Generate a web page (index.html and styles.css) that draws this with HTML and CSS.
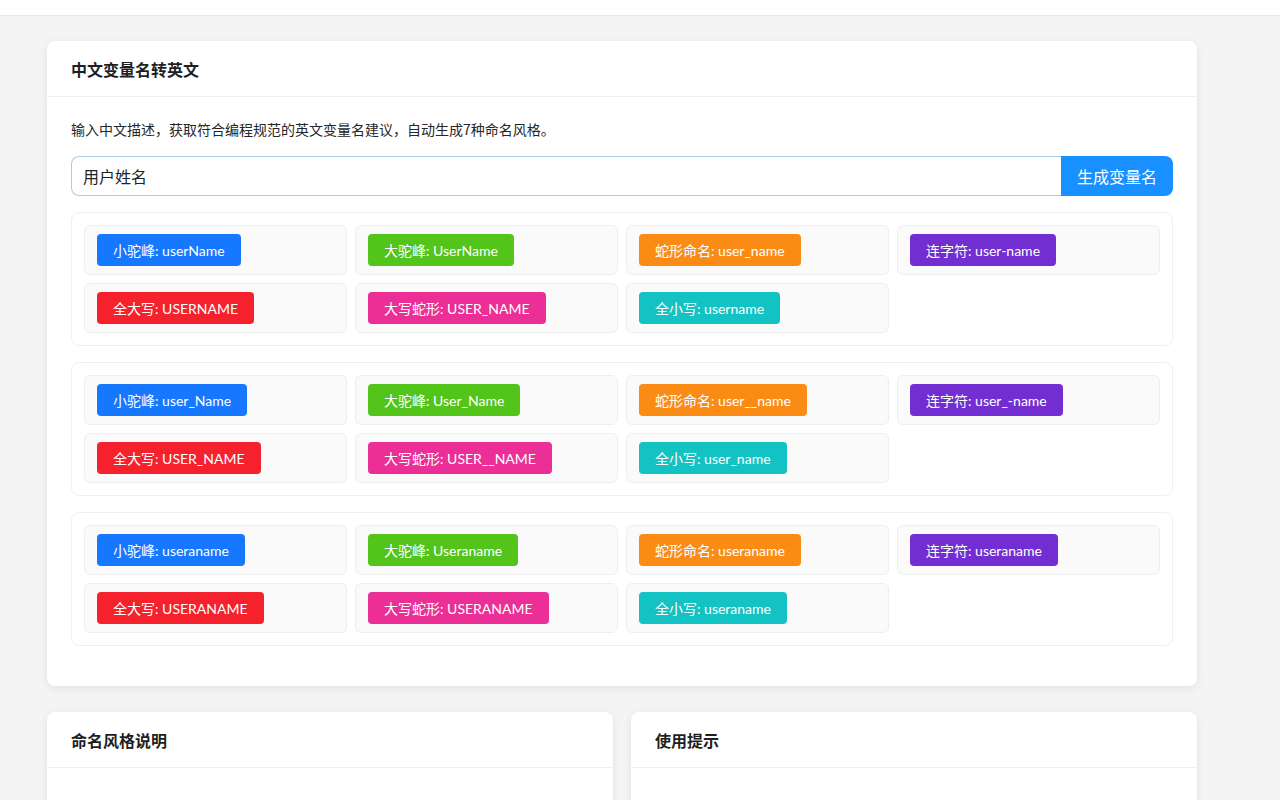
FILE: index.html
```html
<!DOCTYPE html>
<html lang="zh-CN">
<head>
<meta charset="utf-8">
<title>中文变量名转英文</title>
<link rel="stylesheet" href="styles.css">
</head>
<body>
<div class="topbar"></div>
<main class="page">
  <section class="card">
    <div class="card-head">中文变量名转英文</div>
    <div class="card-body">
      <p class="desc">输入中文描述，获取符合编程规范的英文变量名建议，自动生成7种命名风格。</p>
      <div class="search">
        <input class="search-input" type="text" value="用户姓名">
        <button class="search-btn">生成变量名</button>
      </div>

      <div class="group">
        <div class="item"><span class="tag t-blue">小驼峰: userName</span></div>
        <div class="item"><span class="tag t-green">大驼峰: UserName</span></div>
        <div class="item"><span class="tag t-orange">蛇形命名: user_name</span></div>
        <div class="item"><span class="tag t-purple">连字符: user-name</span></div>
        <div class="item"><span class="tag t-red">全大写: USERNAME</span></div>
        <div class="item"><span class="tag t-magenta">大写蛇形: USER_NAME</span></div>
        <div class="item"><span class="tag t-cyan">全小写: username</span></div>
      </div>

      <div class="group">
        <div class="item"><span class="tag t-blue">小驼峰: user_Name</span></div>
        <div class="item"><span class="tag t-green">大驼峰: User_Name</span></div>
        <div class="item"><span class="tag t-orange">蛇形命名: user__name</span></div>
        <div class="item"><span class="tag t-purple">连字符: user_-name</span></div>
        <div class="item"><span class="tag t-red">全大写: USER_NAME</span></div>
        <div class="item"><span class="tag t-magenta">大写蛇形: USER__NAME</span></div>
        <div class="item"><span class="tag t-cyan">全小写: user_name</span></div>
      </div>

      <div class="group">
        <div class="item"><span class="tag t-blue">小驼峰: useraname</span></div>
        <div class="item"><span class="tag t-green">大驼峰: Useraname</span></div>
        <div class="item"><span class="tag t-orange">蛇形命名: useraname</span></div>
        <div class="item"><span class="tag t-purple">连字符: useraname</span></div>
        <div class="item"><span class="tag t-red">全大写: USERANAME</span></div>
        <div class="item"><span class="tag t-magenta">大写蛇形: USERANAME</span></div>
        <div class="item"><span class="tag t-cyan">全小写: useraname</span></div>
      </div>
    </div>
  </section>

  <div class="cols">
    <section class="card">
      <div class="card-head">命名风格说明</div>
      <div class="card-body tall"></div>
    </section>
    <section class="card">
      <div class="card-head">使用提示</div>
      <div class="card-body tall"></div>
    </section>
  </div>
</main>
</body>
</html>
```

FILE: styles.css
```css
* { box-sizing: border-box; }
html, body { margin: 0; padding: 0; }
body {
  background: #f4f4f4;
  font-family: "Noto Sans CJK SC", "Noto Sans", sans-serif;
  color: #222;
  overflow: hidden;
  height: 800px;
}
.topbar {
  height: 16px;
  background: #fff;
  border-bottom: 1px solid #e8e8e8;
}
.page {
  width: 1150px;
  margin: 25px 0 0 47px;
}
.card {
  background: #fff;
  border-radius: 8px;
  box-shadow: 0 2px 8px rgba(0,0,0,0.08);
}
.card-head {
  height: 56px;
  padding: 0 24px;
  display: flex;
  align-items: center;
  font-size: 16px;
  font-weight: 700;
  color: #1f1f1f;
  border-bottom: 1px solid #f0f0f0;
}
.card-body {
  padding: 21px 24px 24px;
}
.card-body.tall { height: 120px; }
.desc {
  margin: 0 0 16px;
  font-size: 14px;
  line-height: 22px;
  color: #262626;
}
.search {
  display: flex;
  height: 40px;
  margin-bottom: 16px;
}
.search-input {
  flex: 1;
  height: 40px;
  border: 1px solid #a9cbe8;
  border-right: none;
  border-radius: 8px 0 0 8px;
  padding: 0 11px;
  font-family: inherit;
  font-size: 16px;
  color: #222;
  outline: none;
  background: #fff;
}
.search-btn {
  width: 112px;
  height: 40px;
  border: none;
  border-radius: 0 8px 8px 0;
  background: #1890ff;
  color: #fff;
  font-family: inherit;
  font-size: 16px;
  padding: 0;
}
.group {
  border: 1px solid #f0f0f0;
  border-radius: 8px;
  padding: 12px;
  display: grid;
  grid-template-columns: repeat(4, 1fr);
  gap: 8px;
  margin-bottom: 16px;
}
.item {
  height: 50px;
  background: #fafafa;
  border: 1px solid #efefef;
  border-radius: 6px;
  padding: 0 12px;
  display: flex;
  align-items: center;
}
.tag {
  display: inline-flex;
  align-items: center;
  height: 32px;
  padding: 0 16px;
  border-radius: 4px;
  color: #fff;
  font-family: Lato, "Noto Sans CJK SC", sans-serif;
  font-size: 14px;
  white-space: nowrap;
}
.t-blue { background: #1677ff; }
.t-green { background: #52c41a; }
.t-orange { background: #fa8c16; }
.t-purple { background: #722ed1; }
.t-red { background: #f5222d; }
.t-magenta { background: #eb2f96; }
.t-cyan { background: #13c2c2; }
.cols {
  margin-top: 26px;
  display: grid;
  grid-template-columns: 1fr 1fr;
  gap: 18px;
}
```
